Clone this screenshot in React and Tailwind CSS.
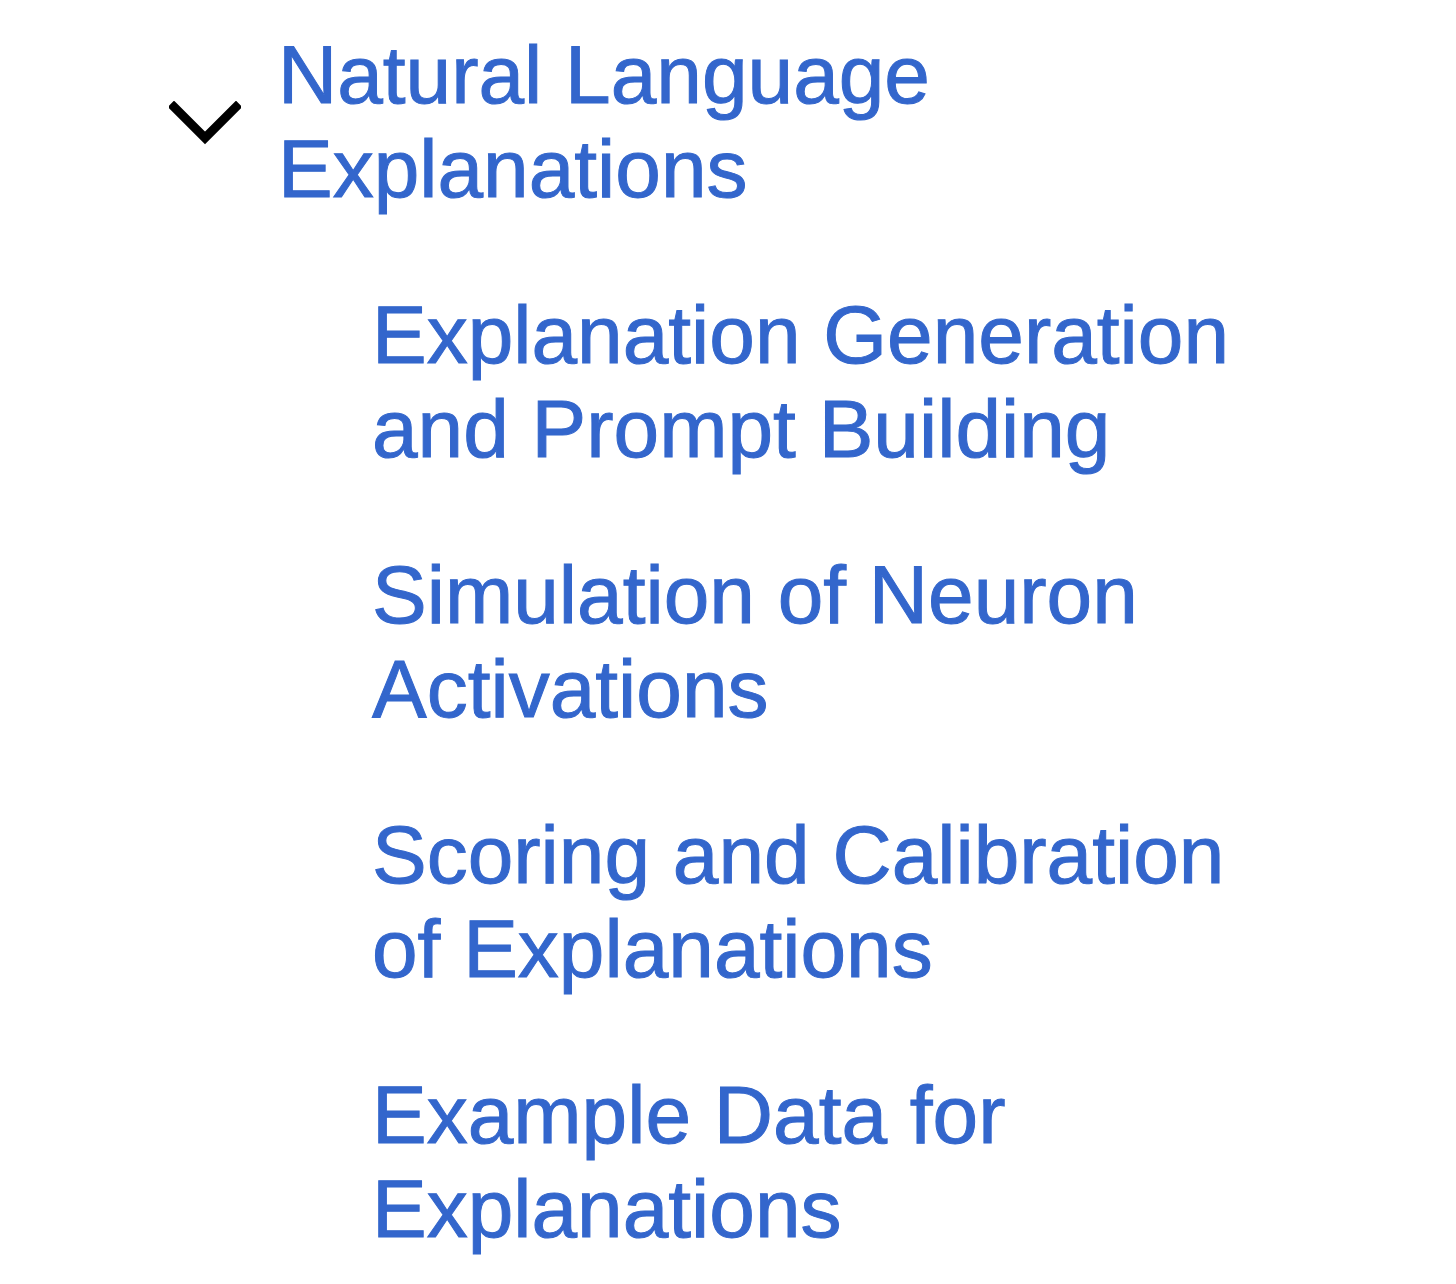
const items = [
  "Explanation Generation and Prompt Building",
  "Simulation of Neuron Activations",
  "Scoring and Calibration of Explanations",
  "Example Data for Explanations",
];

function Chevron() {
  return (
    <svg width="72" height="46" viewBox="0 0 72 46" className="shrink-0 mt-[73px]">
      <polyline
        points="5,6 36,37 67,6"
        fill="none"
        stroke="#000"
        strokeWidth="9"
        strokeLinecap="square"
        strokeLinejoin="miter"
      />
    </svg>
  );
}

export default function App() {
  return (
    <div className="min-h-screen bg-white pl-[169px] pt-[28px] font-['Liberation_Sans',Arial,sans-serif]">
      <nav className="w-[1136px]">
        <div className="flex items-start gap-[37px]">
          <Chevron />
          <a
            href="#"
            className="text-[82px] leading-[94px] text-[#3366cc] w-[900px] [-webkit-text-stroke:1px_#3366cc]"
          >
            Natural Language Explanations
          </a>
        </div>
        <ul className="mt-[72px] pl-[203px] flex flex-col gap-[72px]">
          {items.map((t) => (
            <li key={t}>
              <a
                href="#"
                className="block text-[82px] leading-[94px] text-[#3366cc] [-webkit-text-stroke:1px_#3366cc]"
              >
                {t}
              </a>
            </li>
          ))}
        </ul>
      </nav>
    </div>
  );
}
